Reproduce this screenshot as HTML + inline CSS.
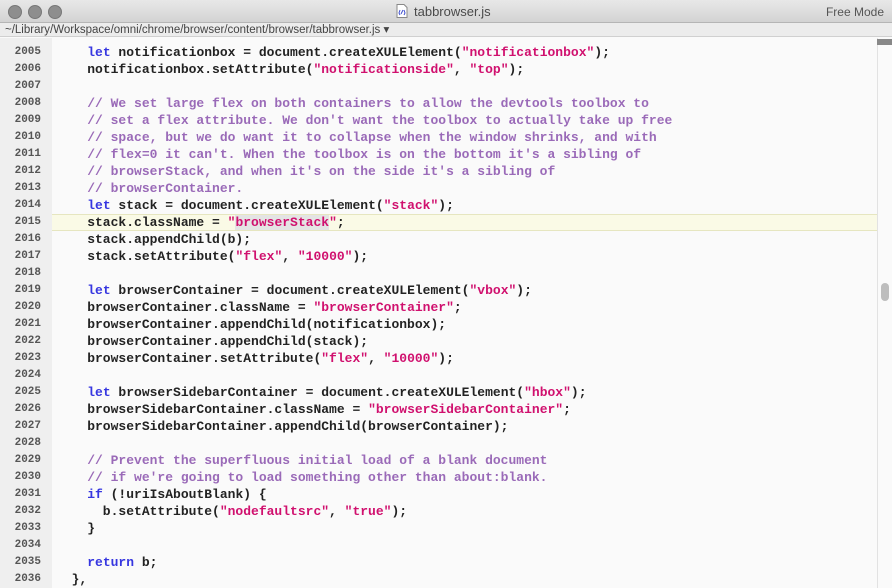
<!DOCTYPE html>
<html><head><meta charset="utf-8"><style>
body{margin:0;width:892px;height:588px;overflow:hidden;background:#fafafa;font-family:"Liberation Sans",sans-serif;position:relative}
#title{position:absolute;left:0;top:0;width:892px;height:22px;background:linear-gradient(#e8e8e8,#d3d3d3);border-bottom:1px solid #b5b5b5}
.dot{position:absolute;top:5px;width:12px;height:12px;border-radius:50%;background:#8e8e8e;border:0.5px solid #777}
#tt{position:absolute;top:4px;left:414px;font-size:13px;color:#4a4a4a}
#fm{position:absolute;top:5px;right:8px;font-size:12px;color:#555}
#path{position:absolute;top:23px;left:0;width:892px;height:14px;background:#ececec;border-bottom:1px solid #d0d0d0;font-size:11.5px;color:#444;line-height:14px;padding-left:5px;box-sizing:border-box}
#gut{position:absolute;top:38px;left:0;width:52px;height:550px;background:#efefef}
#code{position:absolute;top:44px;left:0;width:877px;font-family:"Liberation Mono",monospace;font-size:13px;font-weight:bold;color:#222}
.l{height:17px;line-height:17px;position:relative;white-space:pre}
.n{position:absolute;left:0;width:41px;text-align:right;font-size:11px;color:#555}
.c{position:absolute;left:56px}
.hl{position:absolute;left:52px;right:0;top:0;height:17px;background:#fafae6;border-top:1px solid #e6e6c0;border-bottom:1px solid #e6e6c0;box-sizing:border-box}
.k{color:#3636e0}.s{color:#d0106e}.m{color:#9a6ab8}
#sb{position:absolute;left:877px;top:38px;width:15px;height:550px;background:#fafafa;border-left:1px solid #e2e2e2}
</style></head><body>
<div id="title">
<div class="dot" style="left:8px"></div><div class="dot" style="left:28px"></div><div class="dot" style="left:48px"></div>
<svg style="position:absolute;left:396px;top:4px" width="12" height="14"><path d="M1 .5h7l3 3v10H1z" fill="#fff" stroke="#888"/><path d="M4 6l-1 3 1 2M8 6l1 3-1 2M5 10l2-4" stroke="#4050d0" fill="none"/></svg>
<div id="tt">tabbrowser.js</div><div id="fm">Free Mode</div></div>
<div id="path">~/Library/Workspace/omni/chrome/browser/content/browser/tabbrowser.js ▾</div>
<div id="gut"></div>
<div id="code">
<div class="l"><span class="n">2005</span><span class="c">    <span class="k">let</span> notificationbox = document.createXULElement(<span class="s">"notificationbox"</span>);</span></div>
<div class="l"><span class="n">2006</span><span class="c">    notificationbox.setAttribute(<span class="s">"notificationside"</span>, <span class="s">"top"</span>);</span></div>
<div class="l"><span class="n">2007</span></div>
<div class="l"><span class="n">2008</span><span class="c m">    // We set large flex on both containers to allow the devtools toolbox to</span></div>
<div class="l"><span class="n">2009</span><span class="c m">    // set a flex attribute. We don't want the toolbox to actually take up free</span></div>
<div class="l"><span class="n">2010</span><span class="c m">    // space, but we do want it to collapse when the window shrinks, and with</span></div>
<div class="l"><span class="n">2011</span><span class="c m">    // flex=0 it can't. When the toolbox is on the bottom it's a sibling of</span></div>
<div class="l"><span class="n">2012</span><span class="c m">    // browserStack, and when it's on the side it's a sibling of</span></div>
<div class="l"><span class="n">2013</span><span class="c m">    // browserContainer.</span></div>
<div class="l"><span class="n">2014</span><span class="c">    <span class="k">let</span> stack = document.createXULElement(<span class="s">"stack"</span>);</span></div>
<div class="l"><div class="hl"></div><span class="n">2015</span><span class="c">    stack.className = <span class="s">"<span style="background:#e4e4e4">browserStack</span>"</span>;</span></div>
<div class="l"><span class="n">2016</span><span class="c">    stack.appendChild(b);</span></div>
<div class="l"><span class="n">2017</span><span class="c">    stack.setAttribute(<span class="s">"flex"</span>, <span class="s">"10000"</span>);</span></div>
<div class="l"><span class="n">2018</span></div>
<div class="l"><span class="n">2019</span><span class="c">    <span class="k">let</span> browserContainer = document.createXULElement(<span class="s">"vbox"</span>);</span></div>
<div class="l"><span class="n">2020</span><span class="c">    browserContainer.className = <span class="s">"browserContainer"</span>;</span></div>
<div class="l"><span class="n">2021</span><span class="c">    browserContainer.appendChild(notificationbox);</span></div>
<div class="l"><span class="n">2022</span><span class="c">    browserContainer.appendChild(stack);</span></div>
<div class="l"><span class="n">2023</span><span class="c">    browserContainer.setAttribute(<span class="s">"flex"</span>, <span class="s">"10000"</span>);</span></div>
<div class="l"><span class="n">2024</span></div>
<div class="l"><span class="n">2025</span><span class="c">    <span class="k">let</span> browserSidebarContainer = document.createXULElement(<span class="s">"hbox"</span>);</span></div>
<div class="l"><span class="n">2026</span><span class="c">    browserSidebarContainer.className = <span class="s">"browserSidebarContainer"</span>;</span></div>
<div class="l"><span class="n">2027</span><span class="c">    browserSidebarContainer.appendChild(browserContainer);</span></div>
<div class="l"><span class="n">2028</span></div>
<div class="l"><span class="n">2029</span><span class="c m">    // Prevent the superfluous initial load of a blank document</span></div>
<div class="l"><span class="n">2030</span><span class="c m">    // if we're going to load something other than about:blank.</span></div>
<div class="l"><span class="n">2031</span><span class="c">    <span class="k">if</span> (!uriIsAboutBlank) {</span></div>
<div class="l"><span class="n">2032</span><span class="c">      b.setAttribute(<span class="s">"nodefaultsrc"</span>, <span class="s">"true"</span>);</span></div>
<div class="l"><span class="n">2033</span><span class="c">    }</span></div>
<div class="l"><span class="n">2034</span></div>
<div class="l"><span class="n">2035</span><span class="c">    <span class="k">return</span> b;</span></div>
<div class="l"><span class="n">2036</span><span class="c">  },</span></div>
</div>
<div id="sb"><div style="position:absolute;left:-1px;top:1px;width:16px;height:6px;background:#888"></div><div style="position:absolute;left:3px;top:245px;width:8px;height:18px;border-radius:4px;background:#bdbdbd"></div></div>
</body></html>
